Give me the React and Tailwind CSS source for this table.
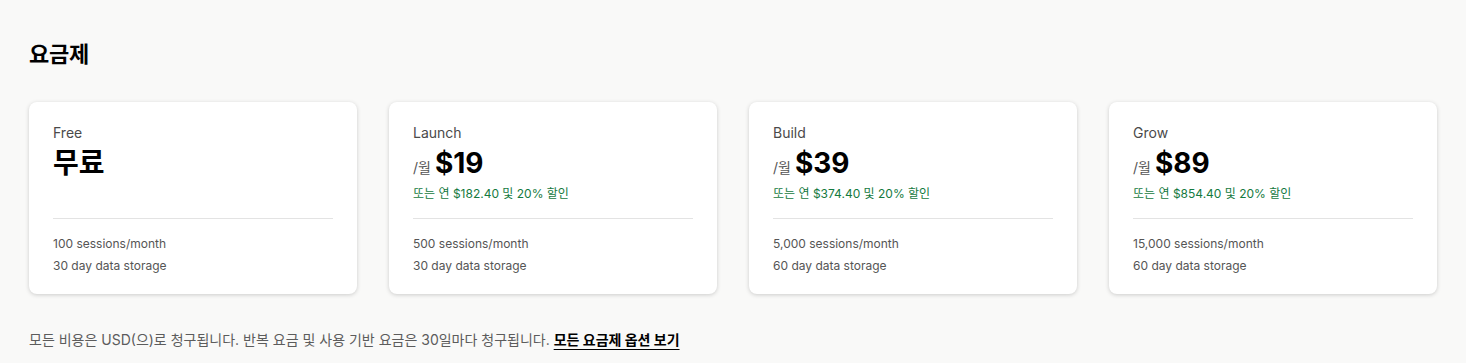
import React from "react";

const plans = [
  { name: "Free", price: "무료", free: true, features: ["100 sessions/month", "30 day data storage"] },
  { name: "Launch", price: "$19", yearly: "$182.40", features: ["500 sessions/month", "30 day data storage"] },
  { name: "Build", price: "$39", yearly: "$374.40", features: ["5,000 sessions/month", "60 day data storage"] },
  { name: "Grow", price: "$89", yearly: "$854.40", features: ["15,000 sessions/month", "60 day data storage"] },
];

export default function App() {
  return (
    <div
      className="w-full min-h-[363px] bg-[#f9f9f8] px-[29px] pt-[39px] text-[#1f1f1f]"
      style={{ fontFamily: "Inter, 'Noto Sans CJK KR', sans-serif" }}
    >
      <h1 className="text-[22px] leading-[30px] font-bold text-black tracking-[-0.3px]">요금제</h1>

      <div className="mt-[33px] grid grid-cols-4 gap-[32px]">
        {plans.map((plan) => (
          <PlanCard key={plan.name} plan={plan} />
        ))}
      </div>

      <p className="mt-[36px] text-[14px] leading-[20px] text-[#5c5c5c]">
        모든 비용은 USD(으)로 청구됩니다. 반복 요금 및 사용 기반 요금은 30일마다 청구됩니다.{" "}
        <a href="#" className="font-bold text-black underline underline-offset-[4px] decoration-[1px]">
          모든 요금제 옵션 보기
        </a>
      </p>
    </div>
  );
}

function PlanCard({ plan }) {
  return (
    <div className="h-[192px] bg-white rounded-[8px] shadow-[0_1px_4px_rgba(0,0,0,0.18)] px-[24px] pt-[21px]">
      <div className="text-[14px] leading-[20px] text-[#4a4a4a]">{plan.name}</div>
      <div className="h-[64px]">
        {plan.free ? (
          <div className="text-[28px] leading-[40px] font-bold text-black">{plan.price}</div>
        ) : (
          <>
            <div className="flex items-baseline gap-[4px] h-[40px]">
              <span className="text-[14px] text-[#555]">/월</span>
              <span className="text-[28px] leading-[40px] font-bold text-black">{plan.price}</span>
            </div>
            <div className="text-[12px] leading-[16px] text-[#157a3f] mt-[3px]">
              또는 연 {plan.yearly} 및 20% 할인
            </div>
          </>
        )}
      </div>
      <div className="h-px bg-[#e3e3e3] mt-[11px]" />
      <ul className="pt-[14px] text-[12px] leading-[22px] text-[#555]">
        {plan.features.map((f) => (
          <li key={f}>{f}</li>
        ))}
      </ul>
    </div>
  );
}
